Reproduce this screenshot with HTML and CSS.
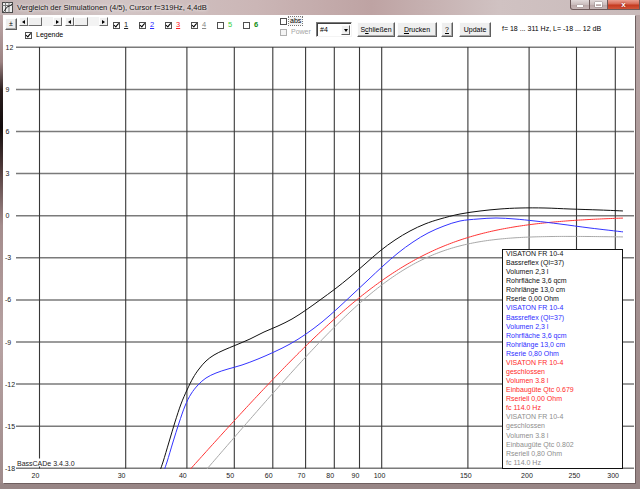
FILE: index.html
```html
<!DOCTYPE html>
<html lang="de">
<head>
<meta charset="utf-8">
<title>Vergleich der Simulationen</title>
<link rel="stylesheet" href="styles.css">
</head>
<body>
<div class="window">
  <div class="titlebar">
    <svg class="app-icon" viewBox="0 0 11 11" width="11" height="11">
      <rect x="0.5" y="0.5" width="10" height="10" fill="#ececec" stroke="#4a4a4a"/>
      <path d="M0.5 3.5H10.5M3.5 0.5V10.5M7 0.5V10.5" stroke="#7a7a7a" fill="none"/>
      <path d="M1.5 9.5C3 9 4 5 6 4.5S9 3 10 2" stroke="#1a1a1a" fill="none"/>
    </svg>
    <span class="title">Vergleich der Simulationen (4/5), Cursor f=319Hz, 4,4dB</span>
    <div class="caption">
      <span class="cap-btn cap-min"><i></i></span>
      <span class="cap-btn cap-max"><i></i></span>
      <span class="cap-btn cap-close">x</span>
    </div>
  </div>
  <div class="frame">
    <div class="client">
      <div class="toolbar">
        <div class="tb-left">
          <div class="tb-row1">
            <span class="btn btn-pm">±</span>
            <div class="scroll">
              <span class="sb-btn"><i class="arr-l"></i></span><span class="sb-thumb"></span><span class="sb-track"></span><span class="sb-btn"><i class="arr-r"></i></span>
            </div>
            <div class="scroll scroll-2">
              <span class="sb-btn"><i class="arr-l"></i></span><span class="sb-thumb"></span><span class="sb-track"></span><span class="sb-btn"><i class="arr-r"></i></span>
            </div>
            <div class="series">
              <span class="chk"><span class="box on"></span><u class="s1">1</u></span>
              <span class="chk"><span class="box on"></span><u class="s2">2</u></span>
              <span class="chk"><span class="box on"></span><u class="s3">3</u></span>
              <span class="chk"><span class="box on"></span><u class="s4">4</u></span>
              <span class="chk"><span class="box"></span><span class="s5">5</span></span>
              <span class="chk"><span class="box"></span><span class="s6">6</span></span>
            </div>
          </div>
          <div class="tb-row2">
            <span class="chk chk-legend"><span class="box on"></span><span>Legende</span></span>
          </div>
        </div>
        <div class="tb-opts">
          <span class="chk chk-abs"><span class="box"></span><span class="focus">abs</span></span>
          <span class="chk chk-power"><span class="box"></span><span>Power</span></span>
        </div>
        <div class="combo"><span class="combo-text">#4</span><span class="combo-btn"><i class="arr-d"></i></span></div>
        <span class="btn btn-close">S<u>c</u>hließen</span>
        <span class="btn btn-print"><u>D</u>rucken</span>
        <span class="btn btn-help"><u>?</u></span>
        <span class="btn btn-update">Update</span>
        <span class="info">f= 18 ... 311 Hz, L= -18 ... 12 dB</span>
      </div>
      <div class="chart">
        <svg class="plot" viewBox="3 41 632 442" width="632" height="442">
          <defs>
            <clipPath id="plotclip"><rect x="16" y="46" width="607" height="423"/></clipPath>
          </defs>
          <g class="hgrid">
            <line x1="16" x2="634" y1="47.3" y2="47.3"/>
            <line x1="16" x2="634" y1="89.4" y2="89.4"/>
            <line x1="16" x2="634" y1="131.5" y2="131.5"/>
            <line x1="16" x2="634" y1="173.6" y2="173.6"/>
            <line x1="16" x2="634" y1="215.7" y2="215.7"/>
            <line x1="16" x2="634" y1="257.8" y2="257.8"/>
            <line x1="16" x2="634" y1="299.9" y2="299.9"/>
            <line x1="16" x2="634" y1="342" y2="342"/>
            <line x1="16" x2="634" y1="384.1" y2="384.1"/>
            <line x1="16" x2="634" y1="426.2" y2="426.2"/>
            <line x1="16" x2="634" y1="468.3" y2="468.3"/>
          </g>
          <g class="vgrid">
            <line x1="39.5" x2="39.5" y1="47" y2="468.5"/>
            <line x1="125.7" x2="125.7" y1="47" y2="468.5"/>
            <line x1="186.9" x2="186.9" y1="47" y2="468.5"/>
            <line x1="234.3" x2="234.3" y1="47" y2="468.5"/>
            <line x1="272.8" x2="272.8" y1="47" y2="468.5"/>
            <line x1="305.6" x2="305.6" y1="47" y2="468.5"/>
            <line x1="334.3" x2="334.3" y1="47" y2="468.5"/>
            <line x1="359.5" x2="359.5" y1="47" y2="468.5"/>
            <line x1="381.7" x2="381.7" y1="47" y2="468.5"/>
            <line x1="467.9" x2="467.9" y1="47" y2="468.5"/>
            <line x1="529.1" x2="529.1" y1="47" y2="468.5"/>
            <line x1="576.5" x2="576.5" y1="47" y2="468.5"/>
            <line x1="615.3" x2="615.3" y1="47" y2="468.5"/>
          </g>
          <g class="ylabels">
            <text x="5.5" y="49.8">12</text>
            <text x="5.5" y="91.9">9</text>
            <text x="5.5" y="134">6</text>
            <text x="5.5" y="176.1">3</text>
            <text x="5.5" y="218.2">0</text>
            <text x="5" y="260.3">-3</text>
            <text x="5" y="302.4">-6</text>
            <text x="5" y="344.5">-9</text>
            <text x="5" y="386.6">-12</text>
            <text x="5" y="428.7">-15</text>
            <text x="5" y="470.8">-18</text>
          </g>
          <g class="xlabels">
            <text x="31.5" y="478">20</text>
            <text x="117.7" y="478">30</text>
            <text x="178.9" y="478">40</text>
            <text x="226.3" y="478">50</text>
            <text x="264.8" y="478">60</text>
            <text x="297.6" y="478">70</text>
            <text x="326.3" y="478">80</text>
            <text x="351.5" y="478">90</text>
            <text x="373.7" y="478">100</text>
            <text x="459.9" y="478">150</text>
            <text x="521.1" y="478">200</text>
            <text x="568.5" y="478">250</text>
            <text x="607.3" y="478">300</text>
          </g>
          <g clip-path="url(#plotclip)" class="curves">
            <path id="c-grey" class="c-grey" d=""/>
            <path id="c-red" class="c-red" d=""/>
            <path id="c-blue" class="c-blue" d=""/>
            <path id="c-black" class="c-black" d=""/>
          </g>
          <rect class="ver-bg" x="16.5" y="458.5" width="58" height="8"/>
          <text class="ver" x="17" y="465.6">BassCADe 3.4.3.0</text>
        </svg>
        <div class="legend">
          <p class="lg-black">VISATON FR 10-4<br>Bassreflex (Ql=37)<br>Volumen 2,3 l<br>Rohrfläche 3,6 qcm<br>Rohrlänge 13,0 cm<br>Rserie 0,00 Ohm</p>
          <p class="lg-blue">VISATON FR 10-4<br>Bassreflex (Ql=37)<br>Volumen 2,3 l<br>Rohrfläche 3,6 qcm<br>Rohrlänge 13,0 cm<br>Rserie 0,80 Ohm</p>
          <p class="lg-red">VISATON FR 10-4<br>geschlossen<br>Volumen 3.8 l<br>Einbaugüte Qtc 0.679<br>Rseriell 0,00 Ohm<br>fc 114.0 Hz</p>
          <p class="lg-grey">VISATON FR 10-4<br>geschlossen<br>Volumen 3.8 l<br>Einbaugüte Qtc 0.802<br>Rseriell 0,80 Ohm<br>fc 114.0 Hz</p>
        </div>
      </div>
    </div>
  </div>
</div>
<script src="script.js"></script>
</body>
</html>
```

FILE: styles.css
```css
* { box-sizing: border-box; }
html, body { margin: 0; padding: 0; }
body {
  width: 640px;
  height: 489px;
  overflow: hidden;
  background: #9a8a8a;
  font-family: "Liberation Sans", Arial, sans-serif;
}
.window {
  display: flex;
  flex-direction: column;
  width: 640px;
  height: 489px;
  padding-bottom: 6px;
  background: linear-gradient(to bottom, #b8a6a6 0%, #a39090 60%, #978585 100%);
}

/* title bar */
.titlebar {
  height: 15px;
  flex: none;
  display: flex;
  align-items: flex-start;
  background: linear-gradient(to right, #c4b4b4 0%, #d2c5c5 18%, #cbb6b6 40%, #bea3a3 58%, #d0c2c2 78%, #c9baba 100%);
}
.app-icon { margin: 2px 0 0 2px; flex: none; display: block; }
.title {
  margin: 3px 0 0 4px;
  font-size: 7.6px;
  line-height: 9px;
  color: #141010;
  white-space: nowrap;
  text-shadow: 0 0 3px rgba(255,255,255,0.9), 0 0 5px rgba(255,255,255,0.7);
}
.caption { margin-left: auto; display: flex; height: 10px; }
.cap-btn {
  height: 10px;
  border: 1px solid #6d5959;
  border-top: none;
  display: flex;
  align-items: center;
  justify-content: center;
  background: linear-gradient(to bottom, #e2d9d9 0%, #cbbdbd 50%, #b9a6a6 51%, #c6b5b5 100%);
}
.cap-min { width: 20px; border-radius: 0 0 0 3px; }
.cap-min i { width: 6px; height: 2px; background: #fff; margin-top: 3px; box-shadow: 0 0 1px #333; }
.cap-max { width: 18px; border-left: none; }
.cap-max i { width: 7px; height: 5px; border: 1px solid #fff; border-top-width: 2px; box-shadow: 0 0 1px #333; }
.cap-close {
  width: 32px;
  border-left: none;
  color: #fff;
  font: bold 8px/8px "Liberation Sans", Arial, sans-serif;
  text-shadow: 0 0 2px #700;
  background: linear-gradient(to bottom, #eaa092 0%, #d86a55 45%, #c5391f 55%, #d0553a 100%);
}

/* frame and client */
.frame {
  flex: 1;
  display: flex;
  padding: 0 5px 0 3px;
  background:
    linear-gradient(to bottom, #bda8a8 0%, #9c8383 10%, #2a1e1e 16%, #120c0c 24%, #4a3636 32%, #a48c8c 45%, #b7a2a2 70%, #9f8b8b 100%) left top / 3px 100% no-repeat;
}
.client {
  flex: 1;
  display: flex;
  flex-direction: column;
  background: #fff;
  box-shadow: 1px 1px 0 #6e5f5f;
}

/* toolbar */
.toolbar {
  height: 26px;
  flex: none;
  display: flex;
  align-items: flex-start;
  font-size: 7px;
  line-height: 8px;
  color: #000;
}
.tb-left { width: 274px; display: flex; flex-direction: column; }
.tb-row1 { display: flex; align-items: flex-start; height: 15px; }
.tb-row2 { display: flex; }

.btn {
  display: flex;
  align-items: center;
  justify-content: center;
  background: #efefef;
  border: 1px solid;
  border-color: #fdfdfd #5e5e5e #5e5e5e #fdfdfd;
  box-shadow: inset -1px -1px 0 #a8a8a8;
  white-space: nowrap;
}
.btn-pm { width: 12px; height: 12px; margin: 3px 0 0 2px; font-size: 7px; }

.scroll { display: flex; width: 43px; height: 9px; margin: 2px 0 0 2px; background: #f3f3f3; }
.scroll-2 { margin-left: 3px; }
.sb-btn, .sb-thumb {
  background: #efefef;
  border: 1px solid;
  border-color: #fdfdfd #6a6a6a #6a6a6a #fdfdfd;
  display: flex;
  align-items: center;
  justify-content: center;
}
.sb-btn { width: 9px; }
.sb-thumb { width: 14px; }
.sb-track { flex: 1; }
.arr-l { width: 0; height: 0; border: 2.5px solid transparent; border-right: 3px solid #000; border-left: none; }
.arr-r { width: 0; height: 0; border: 2.5px solid transparent; border-left: 3px solid #000; border-right: none; }
.arr-d { width: 0; height: 0; border: 2.5px solid transparent; border-top: 3px solid #000; border-bottom: none; }

.series { display: flex; margin: 6px 0 0 5px; }
.chk { display: flex; align-items: center; gap: 4px; white-space: nowrap; }
.series .chk { width: 26px; }
.box {
  position: relative;
  width: 7px;
  height: 7px;
  flex: none;
  background: #fff;
  box-shadow: inset 0 0 0 1px #505050;
}
.box.on::after {
  content: "";
  position: absolute;
  left: 2.3px;
  top: 0.6px;
  width: 1.6px;
  height: 3.6px;
  border: solid #000;
  border-width: 0 1.2px 1.2px 0;
  transform: rotate(40deg);
}
.series u, .series span { font-size: 7.5px; }
.s1 { color: #202020; }
.s2 { color: #2b2bff; }
.s3 { color: #ff2020; }
.s4 { color: #8a8a8a; }
.s5 { color: #38d038; }
.s6 { color: #128c12; font-weight: bold; }

.chk-legend { margin: 1px 0 0 22px; gap: 4px; }

.tb-opts { width: 33px; margin-left: 3px; display: flex; flex-direction: column; }
.chk-abs { margin-top: 2px; gap: 2px; }
.focus { outline: 1px dotted #777; outline-offset: 0; padding: 0 1px; background: #f2f2f2; }
.chk-power { margin-top: 3px; gap: 4px; color: #a5a5a5; }
.chk-power .box { box-shadow: inset 0 0 0 1px #b0b0b0; background: #f4f4f4; }

.combo {
  width: 36px;
  height: 15px;
  margin: 7px 0 0 3px;
  display: flex;
  align-items: center;
  border: 1px solid;
  border-color: #7a7a7a #f4f4f4 #f4f4f4 #7a7a7a;
  box-shadow: inset 1px 1px 0 #404040;
  padding: 2px 1px 1px 2px;
}
.combo-text { flex: 1; padding-left: 1px; }
.combo-btn {
  width: 9px;
  height: 100%;
  display: flex;
  align-items: center;
  justify-content: center;
  background: #efefef;
  border: 1px solid;
  border-color: #fdfdfd #5e5e5e #5e5e5e #fdfdfd;
}

.btn-close, .btn-print, .btn-help, .btn-update { height: 15px; margin-top: 7px; }
.btn-close { width: 38px; margin-left: 5px; }
.btn-print { width: 40px; margin-left: 2px; }
.btn-help { width: 12px; margin-left: 4px; }
.btn-update { width: 32px; margin-left: 6px; }
.info { margin: 10px 0 0 11px; white-space: nowrap; }

/* chart */
.chart { position: relative; flex: 1; }
.plot { display: block; }
.hgrid line { stroke: #7a7a7a; stroke-width: 1.5; }
.vgrid line { stroke: #383838; stroke-width: 1.1; }
.ylabels text, .xlabels text, .ver {
  font-family: "Liberation Sans", Arial, sans-serif;
  font-size: 7px;
  fill: #1a1a1a;
}
.curves path { fill: none; stroke-width: 1; stroke-linejoin: round; }
.c-black { stroke: #101010; }
.c-blue { stroke: #3434ff; }
.c-red { stroke: #ff3535; }
.c-grey { stroke: #a8a8a8; }
.ver-bg { fill: #fff; }

.legend {
  position: absolute;
  left: 499px;
  top: 208px;
  width: 121px;
  height: 220px;
  border: 1px solid #111;
  background: #fff;
  padding: 0 0 0 3px;
  font-size: 7px;
  line-height: 9.08px;
}
.legend p { margin: 0; white-space: nowrap; }
.lg-black { color: #111; margin-top: -1px !important; }
.lg-blue { color: #2f2fff; }
.lg-red { color: #ff2a2a; }
.lg-grey { color: #8e8e8e; }
```

FILE: script.js
```js
(function () {
  function X(f) { return 39.5 + 489.6 * Math.log10(f / 20); }
  function Y(db) { return 47.3 + (12 - db) * 14.03; }
  function hp2(f, fc, q) {
    var r = f / fc, r2 = r * r;
    return 20 * Math.log10(r2 / Math.sqrt((1 - r2) * (1 - r2) + (r / q) * (r / q)));
  }
  function analytic(fc, q, off) {
    var d = '';
    for (var f = 30; f <= 320; f *= 1.01) {
      d += (d ? ' L' : 'M') + X(f).toFixed(2) + ' ' + Y(hp2(f, fc, q) + off).toFixed(2);
    }
    return d;
  }
  function smooth(p) {
    var d = 'M' + p[0][0] + ' ' + p[0][1];
    for (var i = 0; i < p.length - 1; i++) {
      var p0 = p[i - 1] || p[i], p1 = p[i], p2 = p[i + 1], p3 = p[i + 2] || p2;
      var c1x = p1[0] + (p2[0] - p0[0]) / 6, c1y = p1[1] + (p2[1] - p0[1]) / 6;
      var c2x = p2[0] - (p3[0] - p1[0]) / 6, c2y = p2[1] - (p3[1] - p1[1]) / 6;
      d += ' C' + c1x.toFixed(2) + ' ' + c1y.toFixed(2) + ' ' + c2x.toFixed(2) + ' ' + c2y.toFixed(2) + ' ' + p2[0] + ' ' + p2[1];
    }
    return d;
  }
  var black = [[158, 476], [163, 462], [169, 442], [175, 422], [181, 404], [187, 390], [193, 378], [199, 369], [206, 361], [214, 355], [224, 350], [236, 345], [250, 339], [264, 332], [278, 326], [292, 319], [306, 310], [320, 300], [335, 289], [350, 277], [365, 264], [380, 251], [395, 240], [410, 231], [425, 224], [440, 219], [460, 214], [480, 211], [500, 209], [520, 208], [545, 208], [570, 209], [600, 210], [624, 211]];
  var blue = [[162, 476], [167, 462], [173, 442], [179, 423], [185, 406], [191, 394], [198, 385], [206, 378], [216, 373], [228, 369], [242, 365], [258, 359], [274, 352], [290, 344], [306, 334], [322, 322], [338, 308], [353, 294], [368, 280], [383, 266], [398, 253], [413, 242], [428, 233], [444, 226], [460, 221], [478, 219], [496, 218], [515, 219], [535, 221], [560, 224], [590, 228], [624, 232]];
  document.getElementById('c-red').setAttribute('d', analytic(114, 0.679, 0));
  document.getElementById('c-grey').setAttribute('d', analytic(114, 0.802, -1.7));
  document.getElementById('c-black').setAttribute('d', smooth(black));
  document.getElementById('c-blue').setAttribute('d', smooth(blue));
})();
```
